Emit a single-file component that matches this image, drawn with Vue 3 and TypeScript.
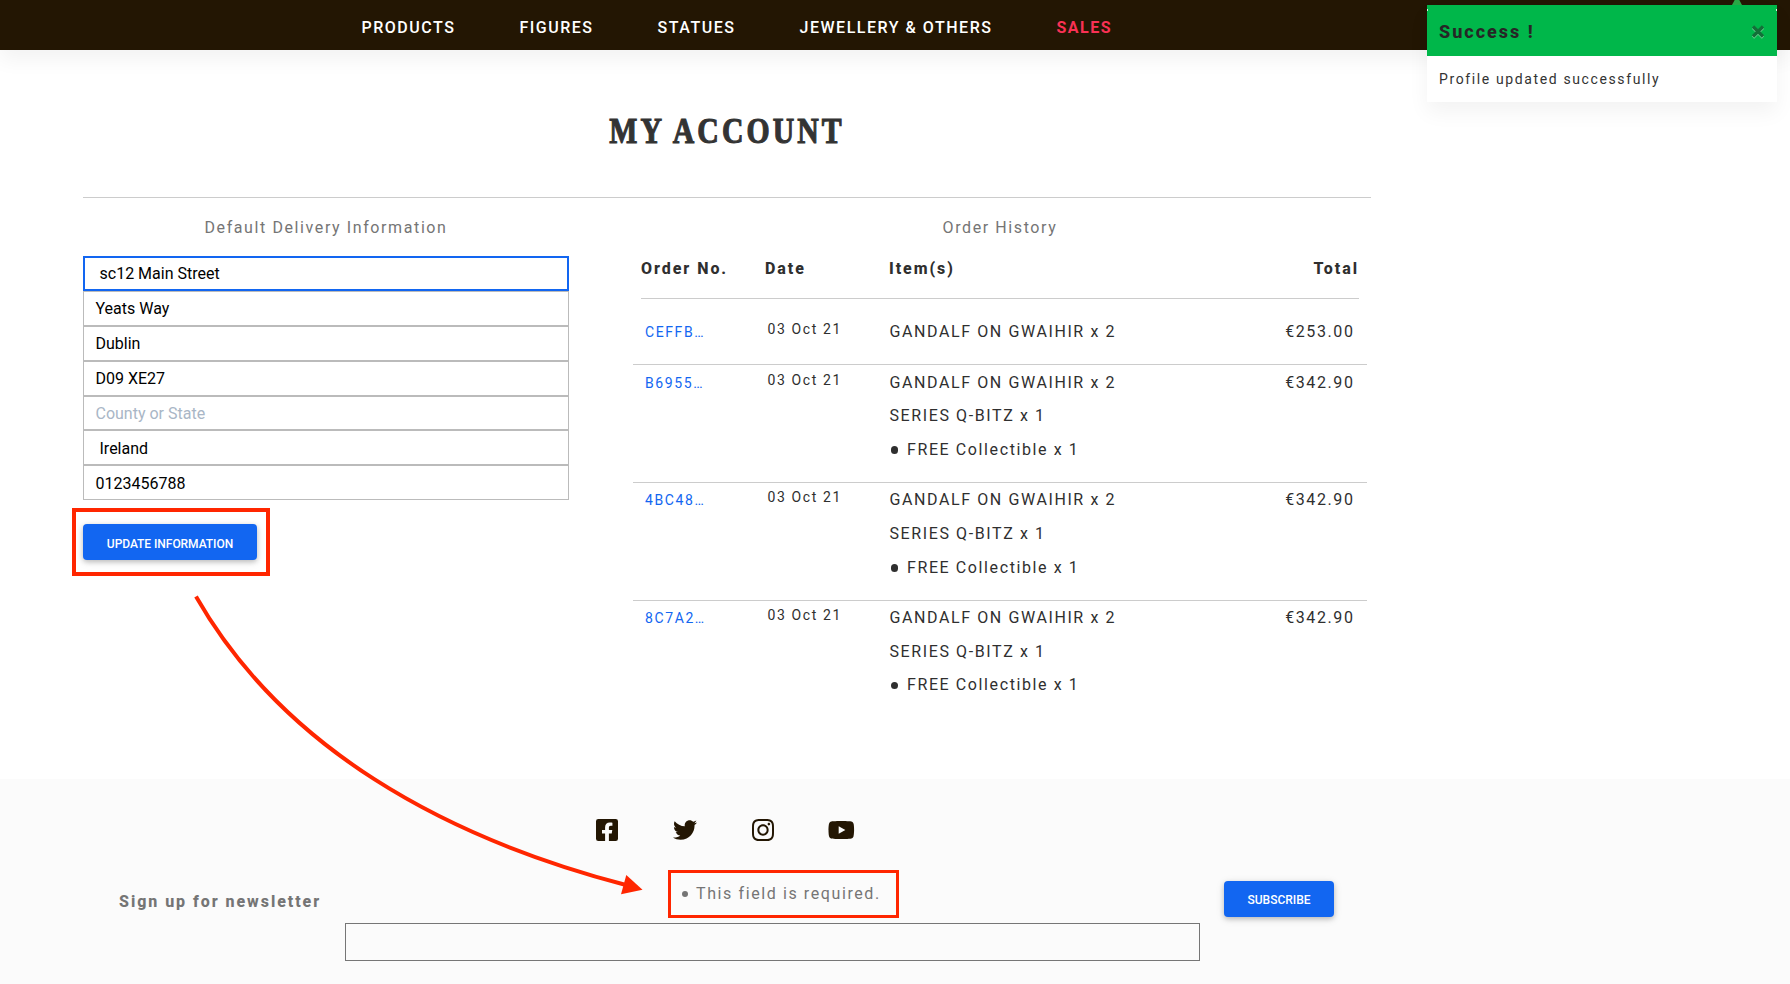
<script setup lang="ts">
interface NavLink { label: string; sale?: boolean }
interface Field { value: string; placeholder?: string; indent?: boolean; focus?: boolean }
interface Order { id: string; date: string; items: string[]; total: string }

const links: NavLink[] = [
  { label: 'PRODUCTS' },
  { label: 'FIGURES' },
  { label: 'STATUES' },
  { label: 'JEWELLERY & OTHERS' },
  { label: 'SALES', sale: true },
]

const fields: Field[] = [
  { value: 'sc12 Main Street', indent: true, focus: true },
  { value: 'Yeats Way' },
  { value: 'Dublin' },
  { value: 'D09 XE27' },
  { value: '', placeholder: 'County or State' },
  { value: 'Ireland', indent: true },
  { value: '0123456788' },
]

const bundle: string[] = ['GANDALF ON GWAIHIR x 2', 'SERIES Q-BITZ x 1', '● FREE Collectible x 1']
const orders: Order[] = [
  { id: 'CEFFB…', date: '03 Oct 21', items: ['GANDALF ON GWAIHIR x 2'], total: '€253.00' },
  { id: 'B6955…', date: '03 Oct 21', items: bundle, total: '€342.90' },
  { id: '4BC48…', date: '03 Oct 21', items: bundle, total: '€342.90' },
  { id: '8C7A2…', date: '03 Oct 21', items: bundle, total: '€342.90' },
]
</script>

<template>
  <div class="page">
    <nav class="nav">
      <a v-for="l in links" :key="l.label" :class="['nav-link', { sale: l.sale }]">{{ l.label }}</a>
    </nav>

    <main class="account">
      <h1 class="title">MY ACCOUNT</h1>
      <div class="columns">
        <section class="delivery">
          <p class="caption">Default Delivery Information</p>
          <form class="fields">
            <div v-for="(f, i) in fields" :key="i" :class="['field', { focus: f.focus, indent: f.indent }]">
              <span v-if="f.value">{{ f.value }}</span>
              <span v-else class="placeholder">{{ f.placeholder }}</span>
            </div>
          </form>
          <div class="action">
            <button class="btn update" type="button">UPDATE INFORMATION</button>
            <span class="mark mark-update"></span>
          </div>
        </section>

        <section class="history">
          <p class="caption">Order History</p>
          <div class="thead">
            <span>Order No.</span><span>Date</span><span>Item(s)</span><span class="right">Total</span>
          </div>
          <div v-for="(o, i) in orders" :key="i" class="row">
            <a class="order-id">{{ o.id }}</a>
            <span class="date">{{ o.date }}</span>
            <div class="items">
              <p v-for="item in o.items" :key="item">
                <template v-if="item.startsWith('●')"><i class="dot"></i>{{ item.slice(2) }}</template>
                <template v-else>{{ item }}</template>
              </p>
            </div>
            <span class="total">{{ o.total }}</span>
          </div>
        </section>
      </div>
    </main>

    <footer class="footer">
      <div class="social">
        <svg class="fb" viewBox="0 32 448 448"><path d="M400 32H48A48 48 0 0 0 0 80v352a48 48 0 0 0 48 48h137.25V327.69h-63V256h63v-54.64c0-62.15 37-96.48 93.67-96.48 27.14 0 55.52 4.84 55.52 4.84v61h-31.27c-30.81 0-40.42 19.12-40.42 38.73V256h68.78l-11 71.69h-57.78V480H400a48 48 0 0 0 48-48V80a48 48 0 0 0-48-48z"/></svg>
        <svg class="tw" viewBox="0 48 512 416"><path d="M459.37 151.716c.325 4.548.325 9.097.325 13.645 0 138.72-105.583 298.558-298.558 298.558-59.452 0-114.68-17.219-161.137-47.106 8.447.974 16.568 1.299 25.34 1.299 49.055 0 94.213-16.568 130.274-44.832-46.132-.975-84.792-31.188-98.112-72.772 6.498.974 12.995 1.624 19.818 1.624 9.421 0 18.843-1.3 27.614-3.573-48.081-9.747-84.143-51.98-84.143-102.985v-1.299c13.969 7.797 30.214 12.67 47.431 13.319-28.264-18.843-46.781-51.005-46.781-87.391 0-19.492 5.197-37.36 14.294-52.954 51.655 63.675 129.3 105.258 216.365 109.807-1.624-7.797-2.599-15.918-2.599-24.04 0-57.828 46.782-104.934 104.934-104.934 30.213 0 57.502 12.67 76.67 33.137 23.715-4.548 46.456-13.32 66.599-25.34-7.798 24.366-24.366 44.833-46.132 57.827 21.117-2.273 41.584-8.122 60.426-16.243-14.292 20.791-32.161 39.308-52.628 54.253z"/></svg>
        <svg class="ig" viewBox="0 32 448 448"><path d="M224.1 141c-63.6 0-114.9 51.3-114.9 114.9s51.3 114.9 114.9 114.9S339 319.5 339 255.9 287.7 141 224.1 141zm0 189.6c-41.1 0-74.7-33.5-74.7-74.7s33.5-74.7 74.7-74.7 74.7 33.5 74.7 74.7-33.6 74.7-74.7 74.7zm146.4-194.3c0 14.9-12 26.8-26.8 26.8-14.9 0-26.8-12-26.8-26.8s12-26.8 26.8-26.8 26.8 12 26.8 26.8zm76.1 27.2c-1.7-35.9-9.9-67.7-36.2-93.9-26.2-26.2-58-34.4-93.9-36.2-37-2.1-147.9-2.1-184.9 0-35.8 1.7-67.6 9.9-93.9 36.1s-34.4 58-36.2 93.9c-2.1 37-2.1 147.9 0 184.9 1.7 35.9 9.9 67.7 36.2 93.9s58 34.4 93.9 36.2c37 2.1 147.9 2.1 184.9 0 35.9-1.7 67.7-9.9 93.9-36.2 26.2-26.2 34.4-58 36.2-93.9 2.1-37 2.1-147.8 0-184.8zM398.8 388c-7.8 19.6-22.9 34.7-42.6 42.6-29.5 11.7-99.5 9-132.1 9s-102.7 2.6-132.1-9c-19.6-7.8-34.7-22.9-42.6-42.6-11.7-29.5-9-99.5-9-132.1s-2.6-102.7 9-132.1c7.8-19.6 22.9-34.7 42.6-42.6 29.5-11.7 99.5-9 132.1-9s102.7-2.6 132.1 9c19.6 7.8 34.7 22.9 42.6 42.6 11.7 29.5 9 99.5 9 132.1s2.7 102.7-9 132.1z"/></svg>
        <svg class="yt" viewBox="14 64 535 384"><path d="M549.655 124.083c-6.281-23.65-24.787-42.276-48.284-48.597C458.781 64 288 64 288 64S117.22 64 74.629 75.486c-23.497 6.322-42.003 24.947-48.284 48.597-11.412 42.867-11.412 132.305-11.412 132.305s0 89.438 11.412 132.305c6.281 23.65 24.787 41.5 48.284 47.821C117.22 448 288 448 288 448s170.78 0 213.371-11.486c23.497-6.321 42.003-24.171 48.284-47.821 11.412-42.867 11.412-132.305 11.412-132.305s0-89.438-11.412-132.305zm-317.51 213.508V175.185l142.739 81.205-142.739 81.201z"/></svg>
      </div>
      <div class="newsletter">
        <strong class="signup">Sign up for newsletter</strong>
        <div class="email">
          <p class="error"><i class="bullet"></i>This field is required.<span class="mark mark-error"></span></p>
          <div class="email-input"></div>
        </div>
        <button class="btn subscribe" type="button">SUBSCRIBE</button>
      </div>
    </footer>

    <aside class="toast">
      <svg class="caret" viewBox="0 0 10 6"><path d="M0 6 3.2 0h3.6L10 6z"/></svg>
      <header class="toast-head">
        <b>Success !</b>
        <svg class="close" viewBox="0 0 14 16">
          <path class="close-glow" d="M2 3.5l10 10M12 3.5l-10 10"/>
          <path class="close-line" d="M2 2.5l10 10M12 2.5l-10 10"/>
        </svg>
      </header>
      <p class="toast-body">Profile updated successfully</p>
    </aside>

    <svg class="arrow" viewBox="0 0 1790 984">
      <path class="arrow-line" d="M196 596.5C282 747 442 837 626 885"/>
      <path class="arrow-head" d="M642.5 889.8 626.3 875 621 894.3z"/>
    </svg>
  </div>
</template>

<style>
body { margin: 0; }
</style>

<style scoped>
* { box-sizing: border-box; }
.page {
  position: relative; width: 1790px; height: 984px; overflow: hidden; background: #fff;
  display: flex; flex-direction: column;
  font-family: Roboto, "Liberation Sans", sans-serif; font-size: 16px; letter-spacing: 1.6px; color: #2f2f2f;
}
p, h1 { margin: 0; }
.nav {
  height: 50px; flex: none; background: #231603; display: flex; align-items: center; gap: 64px; padding: 5px 0 0 361.5px;
  box-shadow: 0 10px 20px rgba(0, 0, 0, .05);
}
.nav-link { color: #fff; font-weight: 500; line-height: 25px; letter-spacing: 1.52px; white-space: nowrap; }
.nav-link.sale { color: #f93154; font-weight: 700; }
.account { height: 729px; flex: none; width: 1371px; padding-left: 83px; }
.title {
  height: 147px; padding-top: 61px; text-align: center; white-space: nowrap; transform: scaleX(.85);
  font: 700 35px/41px "Liberation Serif", serif; letter-spacing: 3.6px; color: #333; -webkit-text-stroke: 1.1px #333;
}
.columns { display: flex; border-top: 1px solid #ccc; }
.delivery { width: 486px; margin-right: 64px; }
.history { width: 734px; }
.caption { color: #757575; text-align: center; line-height: 24px; padding-top: 18px; height: 58px; }
.fields { display: grid; grid-template-rows: repeat(4, 35px) 34px 35px 35px; }
.field {
  border: 1px solid #bbb; padding-left: 11.5px; color: #000; letter-spacing: 0; line-height: 33px; overflow: hidden;
}
.field:nth-child(n+6) { line-height: 35px; }
.field.indent { padding-left: 15.5px; }
.field.focus { border: 2px solid #1266f1; padding-left: 14.5px; line-height: 31px; }
.placeholder { color: #a9b6c6; }
.action { position: relative; margin-top: 24px; height: 36px; }
.btn {
  display: block; height: 36px; padding: 2px 0 0; border: 0; border-radius: 4px; background: #1266f1; color: #fff;
  font: 500 12px/18px Roboto, "Liberation Sans", sans-serif; text-align: center; white-space: nowrap;
  box-shadow: 0 2px 5px rgba(0, 0, 0, .2), 0 2px 10px rgba(0, 0, 0, .1);
}
.update { width: 174px; padding-top: 4px; letter-spacing: -.05px; }
.mark { position: absolute; border: 4px solid #ff2600; }
.mark-update { left: -11px; top: -16px; width: 198px; height: 68px; }
.thead {
  display: grid; grid-template-columns: 124px 124px 1fr 100px; margin: -5px 8px 0; height: 48px; padding-top: 6px;
  border-bottom: 1px solid #ccc; font-weight: 800; line-height: 24px; letter-spacing: 1.95px;
}
.right { text-align: right; }
.row { display: grid; grid-template-columns: 121.5px 123px 1fr 120px; padding: 0 12.5px 0 12px; height: 117.75px; border-top: 1px solid #ccc; }
.thead + .row { height: 65px; border-top: 0; padding-top: 15px; }
.order-id { color: #1266f1; font-size: 14px; line-height: 20px; padding-top: 7.6px; }
.date { font-size: 14px; line-height: 20px; padding: 4.6px 0 0 1px; }
.items { padding-top: .6px; }
.items p { height: 33.65px; line-height: 34px; white-space: nowrap; }
.total { line-height: 34px; padding-top: .6px; text-align: right; }
.dot { display: inline-block; width: 7.5px; height: 7.5px; border-radius: 50%; background: #2f2f2f; margin: 0 9px 1px 1px; }
.footer { flex: 1; background: #fbfbfb; width: 1790px; }
.social { display: flex; align-items: center; height: 42px; padding: 0 0 0 596px; margin-top: 30px; fill: #231603; }
.fb { width: 22px; height: 22px; }
.tw { width: 24px; height: 20px; margin-left: 55px; }
.ig { width: 22px; height: 22px; margin-left: 54.5px; }
.yt { width: 26px; height: 18px; margin-left: 54.5px; overflow: visible; }
.newsletter { display: flex; align-items: flex-start; height: 130px; padding-left: 119px; color: #757575; }
.signup { width: 226px; padding-top: 39px; line-height: 24px; font-weight: 800; letter-spacing: 1.95px; white-space: nowrap; }
.email { width: 855px; padding-top: 31px; }
.error { position: relative; padding-left: 337px; height: 41px; line-height: 24px; }
.bullet { display: inline-block; width: 6px; height: 6px; border-radius: 50%; background: #757575; margin: 0 8px 2px 0; }
.mark-error { left: 323px; top: -12px; width: 231px; height: 48px; border-width: 3px; }
.email-input { height: 38px; border: 1px solid #767676; }
.subscribe { width: 110px; margin: 30px 0 0 24px; }
.toast { position: absolute; left: 1427px; top: 5px; width: 350px; height: 97px; background: #fff; box-shadow: 0 10px 20px rgba(0, 0, 0, .05); }
.toast::before, .toast::after { content: ""; position: absolute; top: 4px; width: 1px; height: 2px; background: #d9f4e4; }
.toast::before { left: 0; }
.toast::after { right: 0; }
.caret { position: absolute; left: 305px; top: -6px; width: 10px; height: 6px; fill: #28a745; }
.toast-head { height: 51px; background: #00b74a; padding: 2px 12px 0; display: flex; justify-content: space-between; align-items: center; color: #262626; font-size: 18px; font-weight: 800; letter-spacing: 2px; }
.toast-head b { font-weight: 800; }
.close { width: 14px; height: 16px; fill: none; stroke-width: 3.2; }
.close-glow { stroke: #72d597; }
.close-line { stroke: #136f38; }
.toast-body { padding: 13px 12px; font-size: 14px; line-height: 20px; color: #333; letter-spacing: 1.62px; }
.arrow { position: absolute; left: 0; top: 0; width: 1790px; height: 984px; pointer-events: none; }
.arrow-line { fill: none; stroke: #ff2600; stroke-width: 4; }
.arrow-head { fill: #ff2600; }
</style>
